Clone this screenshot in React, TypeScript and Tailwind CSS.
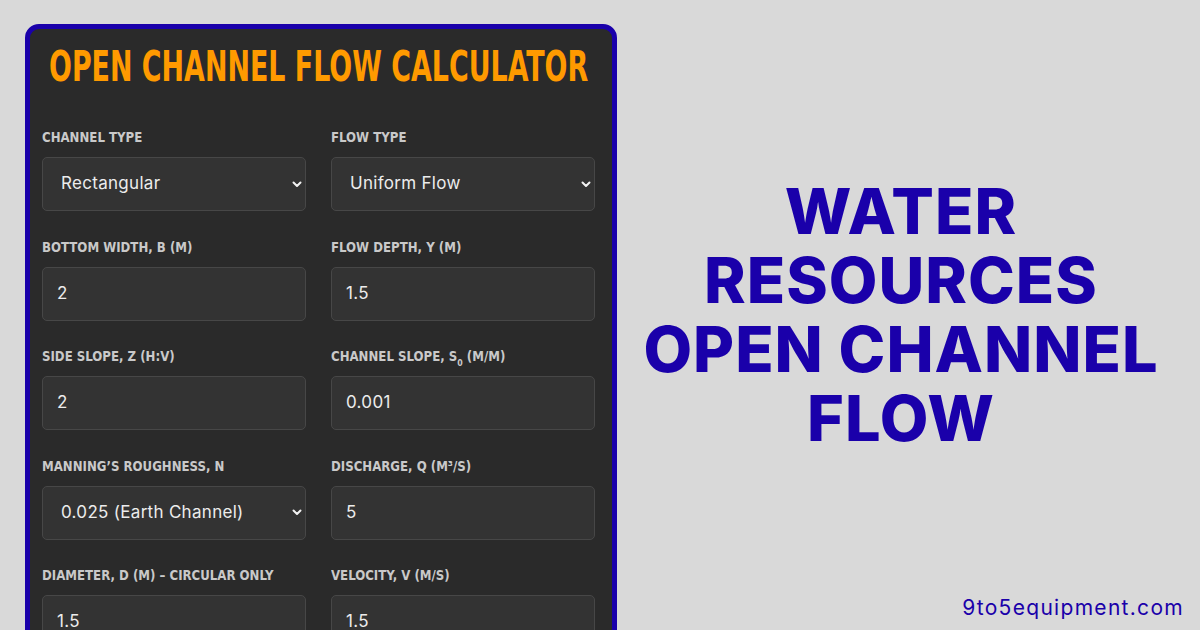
import React from 'react';

type Field = {
  label: React.ReactNode;
  value: string;
  select?: boolean;
};

const ROWS: Field[][] = [
  [
    { label: 'Channel Type', value: 'Rectangular', select: true },
    { label: 'Flow Type', value: 'Uniform Flow', select: true },
  ],
  [
    { label: 'Bottom Width, b (m)', value: '2' },
    { label: 'Flow Depth, y (m)', value: '1.5' },
  ],
  [
    { label: 'Side Slope, z (H:V)', value: '2' },
    {
      label: (
        <>
          Channel Slope, S<sub className="text-[9px] align-[-3px]">0</sub> (m/m)
        </>
      ),
      value: '0.001',
    },
  ],
  [
    { label: 'Manning’s Roughness, n', value: '0.025 (Earth Channel)', select: true },
    { label: 'Discharge, Q (m³/s)', value: '5' },
  ],
  [
    { label: 'Diameter, D (m) – Circular Only', value: '1.5' },
    { label: 'Velocity, V (m/s)', value: '1.5' },
  ],
];

const Chevron = () => (
  <svg width="10" height="7" viewBox="0 0 10 7" className="text-[#f2f2f2]">
    <path d="M1.5 1.5 L5 5 L8.5 1.5" fill="none" stroke="currentColor" strokeWidth="2" strokeLinecap="round" strokeLinejoin="round" />
  </svg>
);

const FieldBox: React.FC<{ field: Field }> = ({ field }) => (
  <div className="flex flex-col">
    <label className="block whitespace-nowrap uppercase text-[13.5px] leading-[16px] font-bold text-[#c9c9c9] origin-left scale-x-[0.97] font-['DejaVu_Sans_Condensed','DejaVu_Sans',sans-serif]">
      {field.label}
    </label>
    <div className="mt-[12px] h-[54px] rounded-[5px] border border-[#474747] bg-[#333333] flex items-center justify-between text-[17px] tracking-[0.3px] text-[#ececec] font-['Inter',sans-serif]">
      <span className={field.select ? 'pl-[18px]' : 'pl-[14px]'}>{field.value}</span>
      {field.select && (
        <span className="pr-[3px] flex items-center">
          <Chevron />
        </span>
      )}
    </div>
  </div>
);

export default function App() {
  return (
    <div className="w-[1200px] h-[630px] overflow-hidden bg-[#d9d9d9] flex">
      <div className="ml-[25px] mt-[24px] w-[592px] shrink-0 h-[700px] rounded-[14px] border-[5px] border-[#1a00aa] bg-[#2a2a2a] pl-[12px] pr-[17px]">
        <div className="mt-[13px] flex justify-center">
          <h1 className="whitespace-nowrap inline-block scale-x-[0.712] text-[#ff9a00] uppercase font-bold text-[42px] leading-[50px] font-['DejaVu_Sans_Condensed','DejaVu_Sans',sans-serif]">
            Open Channel Flow Calculator
          </h1>
        </div>
        <div className="mt-[37px] flex flex-col gap-[27.5px]">
          {ROWS.map((row, i) => (
            <div key={i} className="grid grid-cols-2 gap-[25px]">
              {row.map((f, j) => (
                <FieldBox key={j} field={f} />
              ))}
            </div>
          ))}
        </div>
      </div>
      <div className="flex-1 flex flex-col">
        <div className="flex-1 flex items-center justify-center pr-[15px] pt-[34px]">
          <h2 className="text-center uppercase text-[#1a00aa] font-extrabold text-[63px] leading-[69px] tracking-[1px] font-['Inter',sans-serif]">
            Water
            <br />
            Resources
            <br />
            Open Channel
            <br />
            Flow
          </h2>
        </div>
        <div className="text-right pr-[16px] text-[#1a00aa] text-[21px] leading-[24px] tracking-[1.3px] pb-[10px] font-['Inter',sans-serif]">
          9to5equipment.com
        </div>
      </div>
    </div>
  );
}
